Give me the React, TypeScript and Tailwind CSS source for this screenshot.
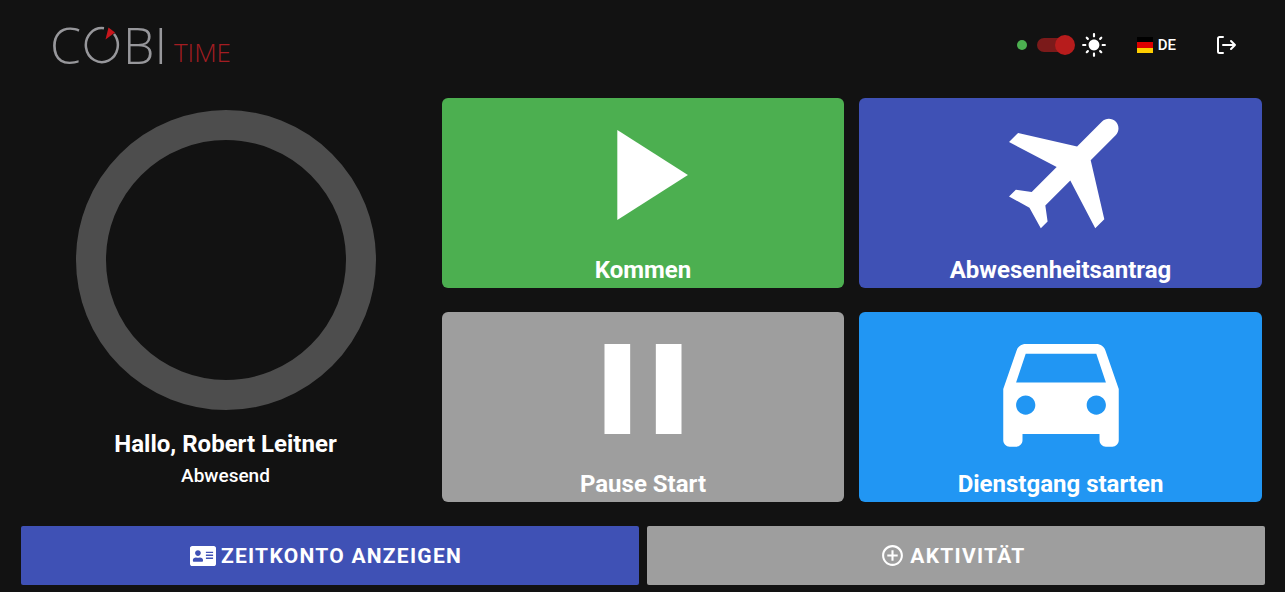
import { FaAddressCard } from "react-icons/fa";
import { MdAddCircleOutline, MdLightMode } from "react-icons/md";

function Logo() {
  return (
    <div className="ml-[50px] mt-[26px] flex items-start font-['Open_Sans',sans-serif] font-light leading-none text-[#97979b]">
      <span className="text-[50px] leading-[38px]">C</span>
      <svg width="36" height="38" viewBox="0 0 36 38" className="ml-[3px]">
        <path d="M20 2.2 A16 17 0 1 0 30 8" fill="none" stroke="#97979b" strokeWidth="2.5" />
        <path d="M21.5 13.5 L24.5 1.5 L31 6.5 Z" fill="#c8161c" />
      </svg>
      <span className="ml-[3px] text-[50px] leading-[38px]">BI</span>
      <span className="ml-[7px] mt-[14px] text-[26px] leading-[24px] text-[#a31d22]">TIME</span>
    </div>
  );
}

function Header() {
  return (
    <header className="flex h-[98px] items-start justify-between">
      <Logo />
      <div className="mr-[47px] mt-[32px] flex items-center text-white">
        <span className="h-[10px] w-[10px] rounded-full bg-[#4caf50]" />
        <div className="relative ml-[10px] h-[14px] w-[34px] rounded-full bg-[#7b1a1a]">
          <span className="absolute -top-[3px] right-[-4px] h-[20px] w-[20px] rounded-full bg-[#b71c1c]" />
        </div>
        <MdLightMode className="ml-[10px] text-[26px]" />
        <div className="ml-[30px] flex h-[16px] w-[16px] flex-col">
          <span className="flex-1 bg-black" />
          <span className="flex-1 bg-[#dd0000]" />
          <span className="flex-1 bg-[#ffce00]" />
        </div>
        <span className="ml-[5px] text-[15px] font-medium">DE</span>
        <svg width="24" height="24" viewBox="0 0 24 24" fill="none" stroke="white" strokeWidth="2" strokeLinecap="round" strokeLinejoin="round" className="ml-[38px]">
          <path d="M9 4H5.5A1.5 1.5 0 0 0 4 5.5v13A1.5 1.5 0 0 0 5.5 20H9" />
          <path d="M9 12h12M17 8l4 4-4 4" />
        </svg>
      </div>
    </header>
  );
}

function Card({ color, label, children }: { color: string; label: string; children: React.ReactNode }) {
  return (
    <button type="button" className={`flex h-[190px] flex-col items-center rounded-[6px] ${color} text-white`}>
      <svg width="154" height="154" viewBox="0 0 24 24" fill="white" className="shrink-0">
        {children}
      </svg>
      <span className="text-[24px] font-bold leading-[36px]">{label}</span>
    </button>
  );
}

export default function App() {
  return (
    <div className="flex h-[592px] w-[1285px] flex-col overflow-hidden bg-[#121212] font-['Roboto',sans-serif]">
      <Header />
      <main className="flex">
        <section className="flex w-[442px] flex-col items-center text-white">
          <div className="ml-[10px] mt-[12px] h-[300px] w-[300px] rounded-full border-[30px] border-[#4d4d4d]" />
          <p className="ml-[9px] mt-[19px] text-[24px] font-bold leading-[30px]">Hallo, Robert Leitner</p>
          <p className="ml-[9px] mt-[2px] text-[19px] font-medium leading-[30px]">Abwesend</p>
        </section>
        <section className="grid grid-cols-[402px_403px] gap-x-[15px] gap-y-[24px]">
          <Card color="bg-[#4caf50]" label="Kommen">
            <path d="M8 5v14l11-7z" />
          </Card>
          <Card color="bg-[#3f51b5]" label="Abwesenheitsantrag">
            <path
              transform="translate(1.8 -0.9) rotate(45 12 12)"
              d="M21 16v-2l-8-5V3.5c0-.83-.67-1.5-1.5-1.5S10 2.67 10 3.5V9l-8 5v2l8-2.5V19l-2 1.5V22l3.5-1 3.5 1v-1.5L13 19v-5.5l8 2.5z"
            />
          </Card>
          <Card color="bg-[#9e9e9e]" label="Pause Start">
            <path d="M6 19h4V5H6v14zm8-14v14h4V5h-4z" />
          </Card>
          <Card color="bg-[#2196f3]" label="Dienstgang starten">
            <path d="M18.92 6.01C18.72 5.42 18.16 5 17.5 5h-11c-.66 0-1.21.42-1.42 1.01L3 12v8c0 .55.45 1 1 1h1c.55 0 1-.45 1-1v-1h12v1c0 .55.45 1 1 1h1c.55 0 1-.45 1-1v-8l-2.08-5.99zM6.5 16c-.83 0-1.5-.67-1.5-1.5S5.67 13 6.5 13s1.5.67 1.5 1.5S7.33 16 6.5 16zm11 0c-.83 0-1.5-.67-1.5-1.5s.67-1.5 1.5-1.5 1.5.67 1.5 1.5-.67 1.5-1.5 1.5zM5 11l1.5-4.5h11L19 11H5z" />
          </Card>
        </section>
      </main>
      <footer className="ml-[21px] mt-[24px] flex gap-[8px] text-[21px] font-bold tracking-[1.26px] text-white">
        <button type="button" className="flex h-[59px] w-[618px] items-center justify-center gap-[5px] rounded-[2px] bg-[#3f51b5] pr-[8px] pt-[2px]">
          <FaAddressCard className="-mt-[2px] text-[26px]" />
          ZEITKONTO ANZEIGEN
        </button>
        <button type="button" className="flex h-[59px] w-[618px] items-center justify-center gap-[5px] rounded-[2px] bg-[#9e9e9e] pr-[6px] pt-[2px]">
          <MdAddCircleOutline className="-mt-[2px] text-[25px]" />
          AKTIVITÄT
        </button>
      </footer>
    </div>
  );
}
